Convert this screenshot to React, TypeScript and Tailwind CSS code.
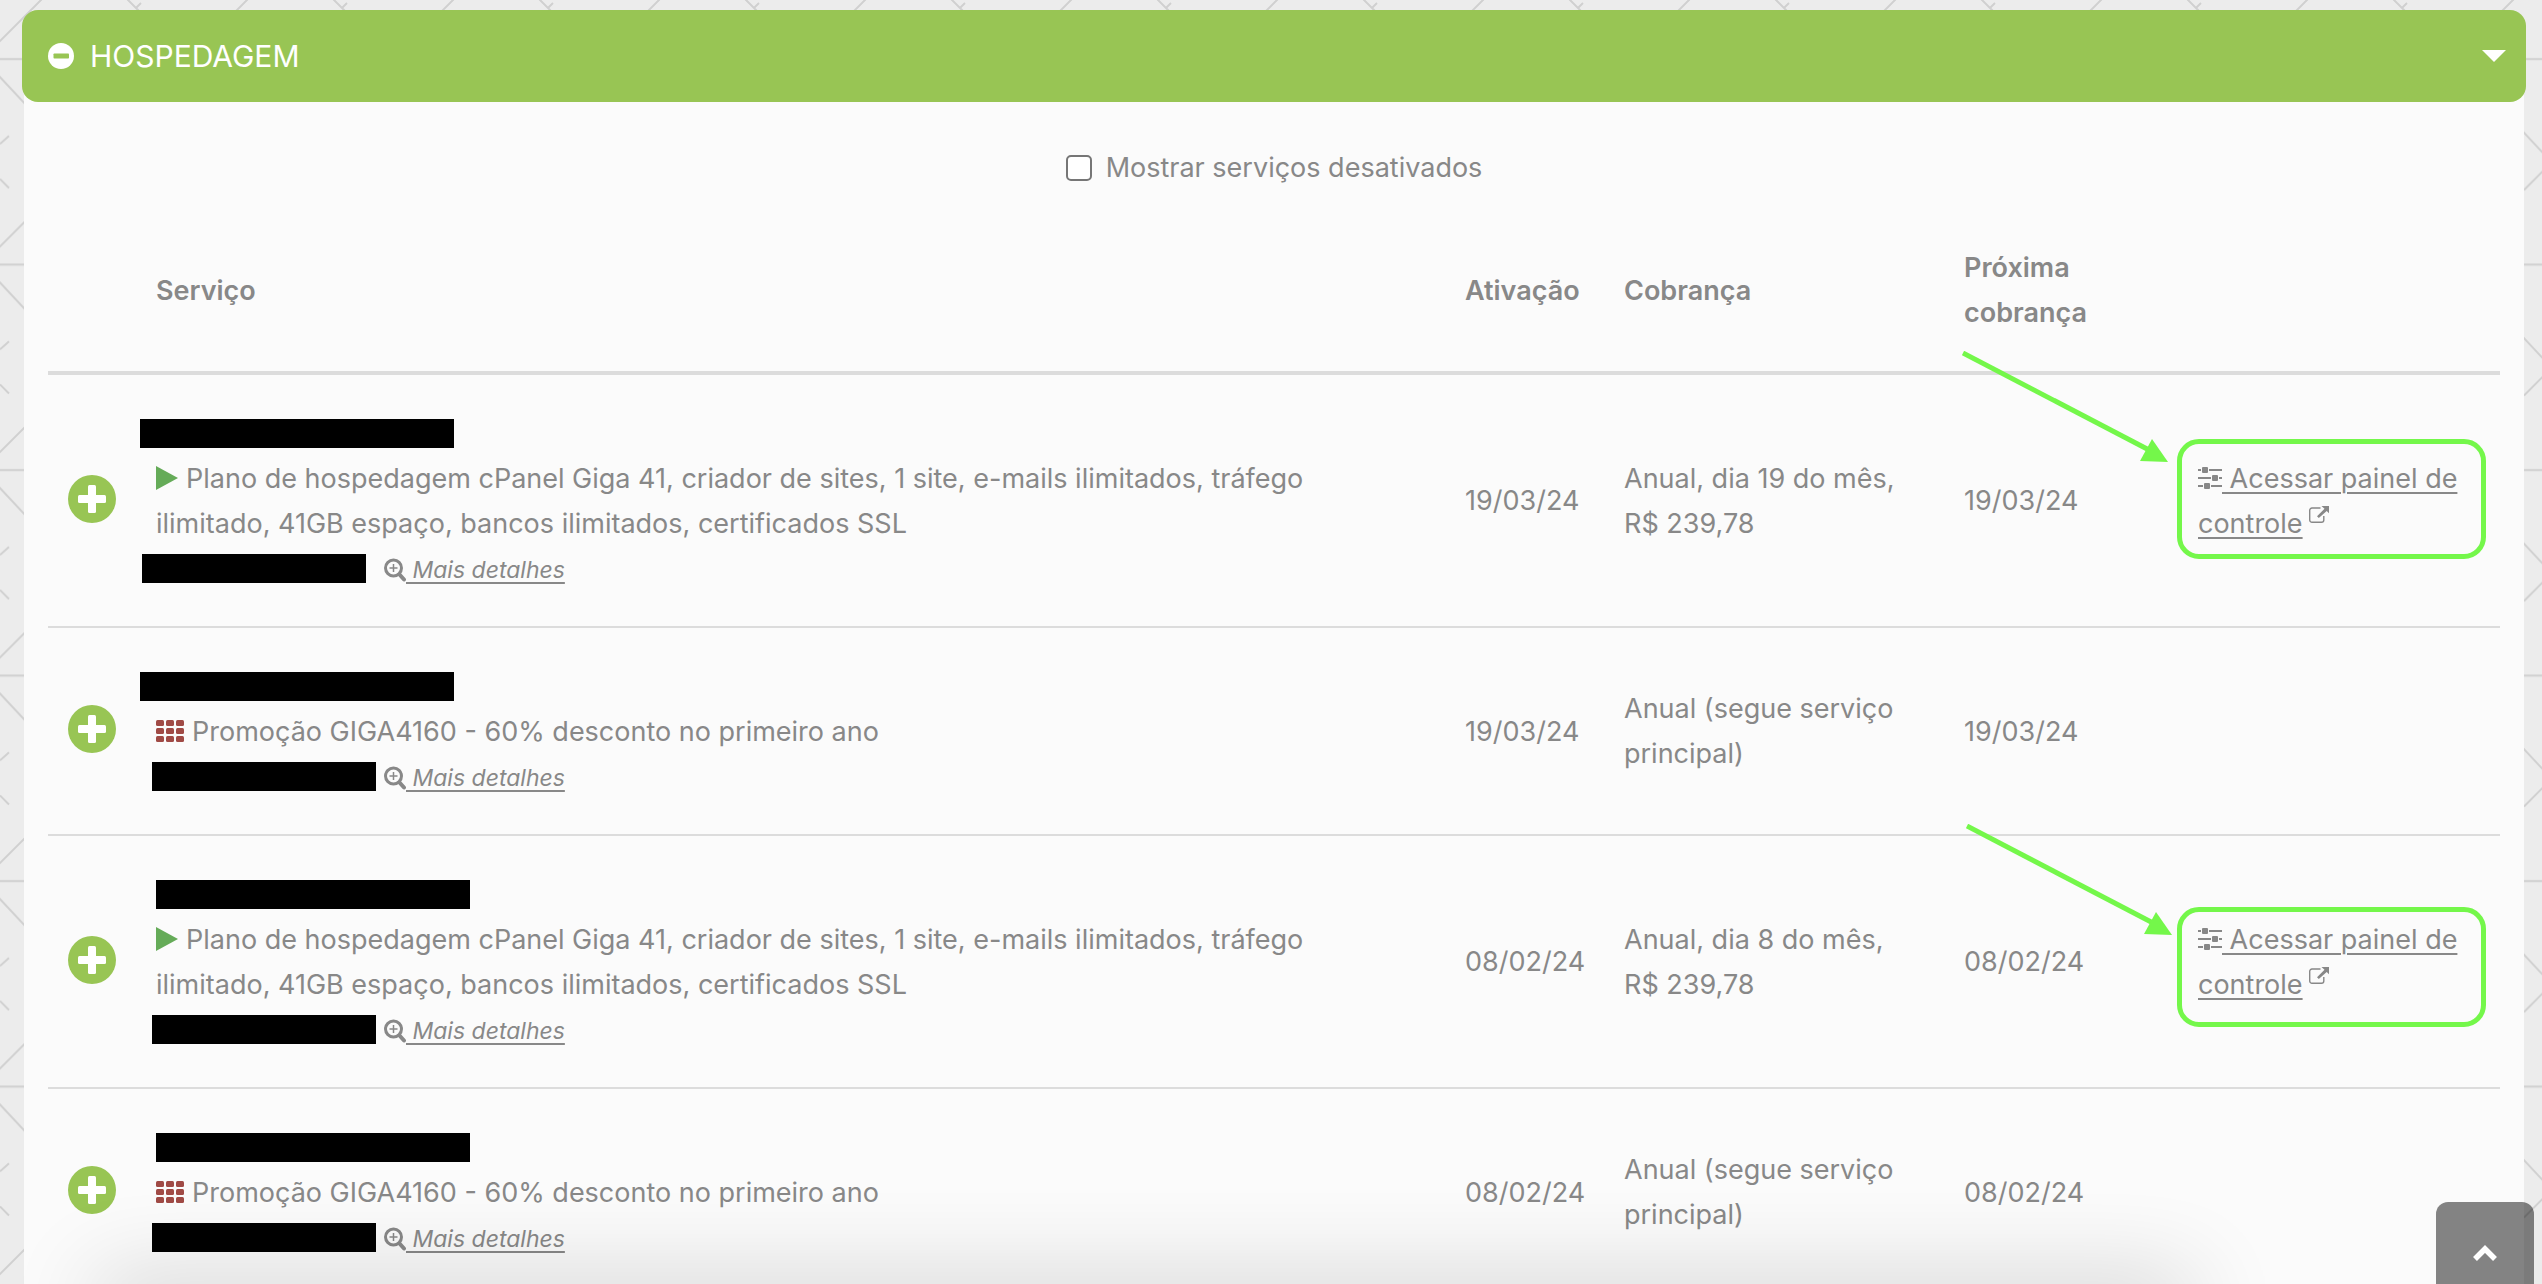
import { useState } from 'react';

type Service = {
    id: number;
    kind: 'plan' | 'promo';
    description: string;
    date: string;
    billing: string;
    titleBar: string;
    detailBar: string;
    callout?: { box: string; arrow: string };
};

const PLAN_TEXT =
    'Plano de hospedagem cPanel Giga 41, criador de sites, 1 site, e-mails ilimitados, tráfego ilimitado, 41GB espaço, bancos ilimitados, certificados SSL';
const PROMO_TEXT = 'Promoção GIGA4160 - 60% desconto no primeiro ano';

const services: Service[] = [
    {
        id: 1,
        kind: 'plan',
        description: PLAN_TEXT,
        date: '19/03/24',
        billing: 'Anual, dia 19 do mês, R$\u00a0239,78',
        titleBar: '-ml-4',
        detailBar: '-ml-[14px]',
        callout: { box: 'top-16', arrow: '-top-6 -left-[216px]' },
    },
    {
        id: 2,
        kind: 'promo',
        description: PROMO_TEXT,
        date: '19/03/24',
        billing: 'Anual (segue serviço principal)',
        titleBar: '-ml-4',
        detailBar: '-ml-1',
    },
    {
        id: 3,
        kind: 'plan',
        description: PLAN_TEXT,
        date: '08/02/24',
        billing: 'Anual, dia 8 do mês, R$\u00a0239,78',
        titleBar: '',
        detailBar: '-ml-1',
        callout: { box: 'top-[71px]', arrow: '-top-3 -left-[212px]' },
    },
    {
        id: 4,
        kind: 'promo',
        description: PROMO_TEXT,
        date: '08/02/24',
        billing: 'Anual (segue serviço principal)',
        titleBar: '',
        detailBar: '-ml-1',
    },
];

function MinusCircleIcon() {
    return (
        <svg className="h-[26px] w-[26px] shrink-0" viewBox="0 0 26 26" aria-hidden="true">
            <circle cx="13" cy="13" r="13" fill="#fff" />
            <rect x="5.5" y="10.5" width="15.5" height="5" rx="0.8" fill="#98c554" />
        </svg>
    );
}

function PlusCircleIcon() {
    return (
        <svg className="block h-12 w-12" viewBox="0 0 48 48" aria-hidden="true">
            <circle cx="24" cy="24" r="24" fill="#98c554" />
            <rect x="20" y="10" width="8" height="28" rx="1.5" fill="#fff" />
            <rect x="10" y="20" width="28" height="8" rx="1.5" fill="#fff" />
        </svg>
    );
}

function PlayIcon() {
    return (
        <svg className="mr-2 inline-block h-6 w-[22px] align-[-2px]" viewBox="0 0 22 24" aria-hidden="true">
            <path fill="#65ab58" d="M0 0l22 12L0 24z" />
        </svg>
    );
}

function GridIcon() {
    return (
        <svg className="mr-2 inline-block h-[22px] w-7 align-[-1px]" viewBox="0 0 28 22" fill="#a04a45" aria-hidden="true">
            {[0, 8, 16].map((y) =>
                [0, 10, 20].map((x) => <rect key={`${x}-${y}`} x={x} y={y} width="8" height="6" rx="1.5" />)
            )}
        </svg>
    );
}

function ZoomIcon() {
    return (
        <svg className="inline-block h-6 w-[22px] align-[-4px]" viewBox="0 0 22 24" fill="none" stroke="#888" aria-hidden="true">
            <circle cx="9.5" cy="10" r="8" strokeWidth="3" />
            <path d="M9.5 6v8M5.5 10h8" strokeWidth="1.5" />
            <path d="M15.5 16.5l4.5 5" strokeWidth="4" strokeLinecap="round" />
        </svg>
    );
}

function SlidersIcon() {
    return (
        <svg className="inline-block h-[22px] w-6 align-[-1px]" viewBox="0 0 24 22" fill="#888" aria-hidden="true">
            <path d="M0 2h24v2H0zM0 10h24v2H0zM0 18h24v2H0z" />
            <path fill="#fbfbfb" d="M3 0h8v6H3zM13 8h8v6h-8zM5 16h8v6H5z" />
            <rect x="4" y="0" width="6" height="6" rx="1" />
            <rect x="14" y="8" width="6" height="6" rx="1" />
            <rect x="6" y="16" width="6" height="6" rx="1" />
        </svg>
    );
}

function ExternalIcon() {
    return (
        <svg className="ml-[6px] inline-block h-[18px] w-5 align-[9px]" viewBox="0 0 20 18" aria-hidden="true">
            <path
                fill="none"
                stroke="#888"
                strokeWidth="1.4"
                d="M11.5 2H3A2.3 2.3 0 0 0 .7 4.3V14A2.3 2.3 0 0 0 3 16.300h9.500a2.300 2.300 0 0 0 2.300-2.300v-4"
            />
            <path fill="#888" d="M12.500 0H20v7.200l-2.300-2.300-7.900 7.200-1.800-1.800 7.500-7.500z" />
        </svg>
    );
}

function Callout({ box, arrow }: { box: string; arrow: string }) {
    return (
        <>
            <div
                className={`pointer-events-none absolute right-[14px] -left-px h-[120px] rounded-[22px] border-[5px] border-[#74f74a] ${box}`}
            />
            <svg
                className={`pointer-events-none absolute h-28 w-[208px] ${arrow}`}
                viewBox="0 0 208 112"
                aria-hidden="true"
            >
                <path d="M1 2l188 98" stroke="#74f74a" strokeWidth="5" />
                <path fill="#74f74a" d="M206 111l-28-1 12-22z" />
            </svg>
        </>
    );
}

function Backdrop() {
    return (
        <svg className="pointer-events-none fixed inset-0 -z-10 h-full w-full" aria-hidden="true">
            <defs>
                <pattern id="lines" width="206" height="205.5" patternUnits="userSpaceOnUse">
                    <path
                        fill="none"
                        stroke="#d0d0d0"
                        strokeWidth="2"
                        d="M-1 42L42-1M-1 247.500L42 204.500M127-1l22 22M136 8l5-5M-1 59h207M-1 76l72 77M52 190l19-19M0 144l9-8M0 179l9 9"
                    />
                </pattern>
            </defs>
            <rect width="100%" height="100%" fill="#ececec" />
            <rect width="100%" height="100%" fill="url(#lines)" />
        </svg>
    );
}

function ServiceRow({ service }: { service: Service }) {
    return (
        <tr className="border-b-2 border-[#dcdcdc]">
            <td className="px-5 pb-1">
                <button type="button" aria-label="Expandir serviço" className="block cursor-pointer rounded-full">
                    <PlusCircleIcon />
                </button>
            </td>
            <td className="px-5 py-9">
                <div className="flex h-[45px] items-center">
                    <span className={`h-[29px] w-[314px] bg-black ${service.titleBar}`} />
                </div>
                <p>
                    {service.kind === 'plan' ? <PlayIcon /> : <GridIcon />}
                    {service.description}
                </p>
                <div className="flex h-11 items-center text-[23px] italic">
                    <div className="w-[228px]">
                        <div className={`h-[29px] w-[224px] bg-black ${service.detailBar}`} />
                    </div>
                    <a href="#detalhes" className="pt-1 underline decoration-2 underline-offset-4">
                        <ZoomIcon /> Mais detalhes
                    </a>
                </div>
            </td>
            <td className="px-5">{service.date}</td>
            <td className="px-5">{service.billing}</td>
            <td className="px-5">{service.date}</td>
            <td className="relative px-5">
                {service.callout && (
                    <>
                        <a href="#painel" className="underline decoration-2 underline-offset-4">
                            <SlidersIcon /> Acessar painel de controle
                        </a>
                        <ExternalIcon />
                        <Callout {...service.callout} />
                    </>
                )}
            </td>
        </tr>
    );
}

export default function App() {
    const [showDisabled, setShowDisabled] = useState(false);

    return (
        <div className="isolate h-screen overflow-hidden pt-[10px] pr-4 pl-[22px] font-['Inter','Liberation_Sans',sans-serif] text-[27px] leading-[45px] text-[#888]">
            <Backdrop />

            {/* Section header */}
            <button
                type="button"
                className="relative z-10 flex h-[92px] w-full items-center rounded-2xl bg-[#98c554] pr-5 pl-[26px] text-left text-white"
            >
                <MinusCircleIcon />
                <span className="ml-4 flex-1 text-[30px]">HOSPEDAGEM</span>
                <svg className="h-3 w-6" viewBox="0 0 24 12" aria-hidden="true">
                    <path fill="#fff" d="M0 0h24L12 12z" />
                </svg>
            </button>

            <main className="mx-[2px] -mt-4 bg-[#fbfbfb] px-6 pt-4">
                <div className="flex h-[107px] items-center justify-center pt-6">
                    <label className="flex items-center gap-[14px]">
                        <input
                            type="checkbox"
                            checked={showDisabled}
                            onChange={(e) => setShowDisabled(e.target.checked)}
                            className="h-[26px] w-[26px] appearance-none rounded-[5px] border-2 border-[#767676] bg-white checked:bg-[#98c554]"
                        />
                        Mostrar serviços desativados
                    </label>
                </div>

                {/* Services */}
                <table className="w-full table-fixed text-left">
                    <colgroup>
                        <col className="w-[88px]" />
                        <col />
                        <col className="w-[159px]" />
                        <col className="w-[340px]" />
                        <col className="w-[234px]" />
                        <col className="w-[322px]" />
                    </colgroup>
                    <thead>
                        <tr className="border-b-4 border-[#dcdcdc]">
                            <th className="px-5 py-9" />
                            <th className="px-5 font-semibold">Serviço</th>
                            <th className="px-5 font-semibold">Ativação</th>
                            <th className="px-5 font-semibold">Cobrança</th>
                            <th className="px-5 py-9 font-semibold">Próxima cobrança</th>
                            <th className="px-5" />
                        </tr>
                    </thead>
                    <tbody>
                        {services.map((service) => (
                            <ServiceRow key={service.id} service={service} />
                        ))}
                    </tbody>
                </table>
            </main>

            {/* Shade cast from the bottom edge */}
            <div className="pointer-events-none fixed right-[350px] -bottom-10 left-24 h-10 shadow-[0_0_90px_rgba(0,0,0,0.24)]" />

            <button
                type="button"
                aria-label="Voltar ao topo"
                className="fixed right-2 bottom-0 z-20 flex h-[82px] w-[98px] items-center justify-center rounded-t-xl bg-black/48 pt-5"
            >
                <svg className="h-4 w-[26px]" viewBox="0 0 26 16" fill="none" aria-hidden="true">
                    <path d="M3 14L13 4l10 10" stroke="#fff" strokeWidth="5.5" />
                </svg>
            </button>
        </div>
    );
}
